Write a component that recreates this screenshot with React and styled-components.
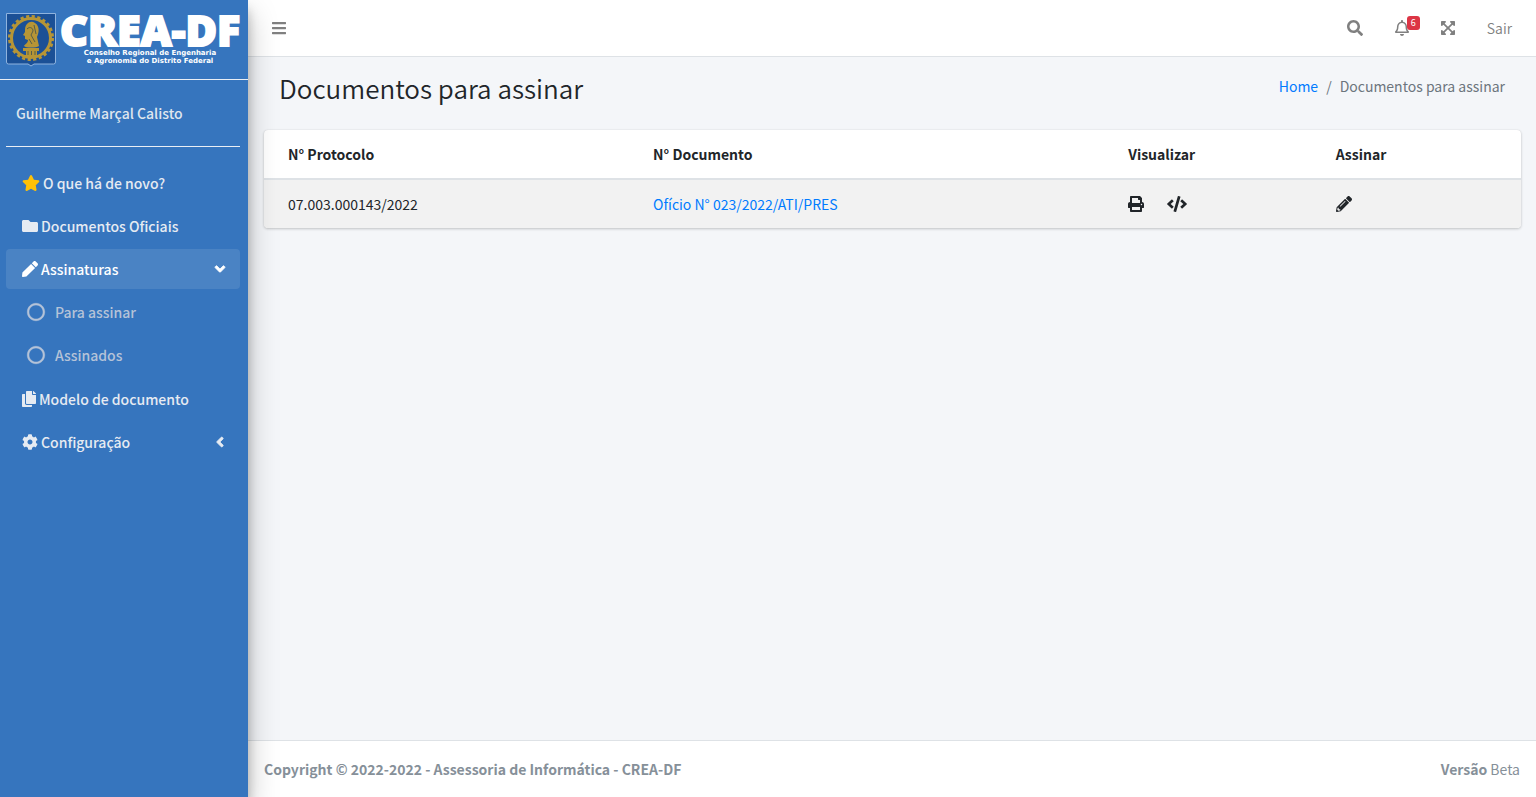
import React from "react";
import styled, { createGlobalStyle, css } from "styled-components";
import {
  FaAngleDown,
  FaAngleLeft,
  FaBars,
  FaCode,
  FaCog,
  FaCopy,
  FaExpandArrowsAlt,
  FaFolder,
  FaPen,
  FaPencilAlt,
  FaPrint,
  FaRegBell,
  FaRegCircle,
  FaSearch,
  FaStar,
} from "react-icons/fa";

const GlobalStyle = createGlobalStyle`
  *, *::before, *::after { box-sizing: border-box; }
  body {
    margin: 0;
    font-family: "Source Sans Pro", "Noto Sans CJK SC", "Noto Sans", sans-serif;
    font-size: 14px;
    line-height: 24px;
    color: #212529;
    background: #f4f6f9;
  }
  a { color: #007bff; text-decoration: none; }
  button { font: inherit; color: inherit; background: none; border: 0; padding: 0; cursor: pointer; }
  svg { flex: none; }
`;

const Page = styled.div`
  display: flex;
  min-height: 100vh;
`;

const Sidebar = styled.aside`
  flex: none;
  width: 248px;
  background: #3675be;
  box-shadow: 0 14px 28px rgba(0, 0, 0, 0.25), 0 10px 10px rgba(0, 0, 0, 0.22);
  z-index: 1;
`;

const Brand = styled.a`
  display: block;
  height: 80px;
  padding: 8px 4px;
  border-bottom: 1px solid #e9eef5;
  svg { display: block; overflow: visible; }
`;

const SidebarBody = styled.div`
  padding: 0 8px 0 6px;
`;

const UserName = styled.a`
  display: block;
  padding: 21px 10px;
  && { color: #dfe6ee; }
  border-bottom: 1px solid #e9eef5;
  font-weight: 500;
`;

const Menu = styled.ul`
  list-style: none;
  margin: 16px 0 0;
  padding: 0;
`;

const SubMenu = styled.ul`
  list-style: none;
  margin: 3px 0 4px;
  padding: 0;
`;

const MenuItem = styled.li`
  margin-bottom: 3px;
`;

const menuRow = css`
  display: flex;
  align-items: center;
  width: 100%;
  height: 40px;
  padding: 0 12px 0 ${(p) => (p.$sub ? "21px" : "16px")};
  gap: ${(p) => (p.$sub ? "10px" : "3px")};
  color: ${(p) => (p.$active ? "#ffffff" : p.$sub ? "#b5c3d8" : "#e6ebf2")};
  background: ${(p) => (p.$active ? "rgba(255, 255, 255, 0.1)" : "transparent")};
  border-radius: 4px;
  font-weight: 500;
  text-align: left;
`;

const MenuLink = styled.a`
  && {
    ${menuRow}
  }
`;

const MenuToggle = styled.button.attrs({ type: "button" })`
  && {
    ${menuRow}
  }
`;

const MenuLabel = styled.span`
  flex: 1;
`;

const RingIcon = styled(FaRegCircle)`
  width: 18px;
  height: 18px;
  stroke: currentColor;
  stroke-width: 14px;
  overflow: visible;
`;

const Chevron = styled.span`
  display: flex;
  font-size: 16px;
  svg { stroke: currentColor; stroke-width: 24px; }
`;

/* Glyphs whose drawing is 14px wide inside a 16px square */
const NarrowIcon = styled.span`
  display: flex;
  justify-content: center;
  width: 14px;
  font-size: 16px;
`;

const Main = styled.div`
  flex: 1;
  min-width: 0;
  display: flex;
  flex-direction: column;
`;

const TopBar = styled.header`
  display: flex;
  align-items: center;
  justify-content: space-between;
  height: 57px;
  padding: 0 24px;
  background: #fff;
  border-bottom: 1px solid #dee2e6;
  color: #808080;
`;

const TopActions = styled.nav`
  display: flex;
  align-items: center;
  gap: 32px;
`;

const IconButton = styled.button`
  display: flex;
  position: relative;
`;

const Badge = styled.span`
  position: absolute;
  top: -4px;
  left: 12px;
  padding: 0 4px;
  border-radius: 3px;
  background: #dc3545;
  color: #fff;
  font-size: 9px;
  line-height: 14px;
`;

const LogoutLink = styled.a`
  && { color: #808080; }
  font-weight: 350;
`;

const ContentHeader = styled.div`
  display: flex;
  justify-content: space-between;
  align-items: flex-start;
  padding: 13px 31px 24px;
`;

const Title = styled.h1`
  margin: 0;
  font-size: 26px;
  line-height: 36px;
  font-weight: 350;
`;

const Breadcrumb = styled.ol`
  display: flex;
  gap: 8px;
  margin: 4px 0 0;
  padding: 0;
  list-style: none;
  color: #6c757d;
`;

const Card = styled.section`
  margin: 0 15px 0 16px;
  border-radius: 4px;
  overflow: hidden;
  background: #fff;
  box-shadow: 0 0 1px rgba(0, 0, 0, 0.13), 0 1px 3px rgba(0, 0, 0, 0.2);
`;

const Table = styled.table`
  width: 100%;
  table-layout: fixed;
  border-collapse: separate;
  border-spacing: 0;
  th, td { padding: 12px; text-align: left; vertical-align: middle; }
  th { font-weight: 700; border-bottom: 2px solid #dee2e6; }
  tr > :first-child { padding-left: 24px; }
  tbody tr { background: #f2f2f2; }
`;

const Column = styled.col`
  width: ${(p) => p.$width};
`;

const CellActions = styled.div`
  display: flex;
  align-items: center;
  gap: 23px;
`;

const Footer = styled.footer`
  display: flex;
  justify-content: space-between;
  margin-top: auto;
  padding: 16px;
  background: #fff;
  border-top: 1px solid #dee2e6;
  color: #869099;
`;

function BrandLogo() {
  return (
    <svg width="240" height="62" viewBox="0 0 240 62" role="img" aria-label="CREA-DF">
      <path d="M2.500 5.500H51.500V54Q51.500 56 49.500 56H30L27 58L24 56H4.500Q2.500 56 2.500 54Z" fill="#1b5096" stroke="#8fb3de" />
      <circle cx="27" cy="30" r="21.500" fill="none" stroke="#b69536" strokeWidth="3" strokeDasharray="3.170 2.460" />
      <circle cx="27" cy="30" r="19.500" fill="none" stroke="#b69536" strokeWidth="3" />
      <path d="M21 22C21 15 27 12 31 15C36 18 35 25 33 29L35 38C32 40 22 40 20 38C21 36 24 35 24 32L21 31L21 28L19 27L21 24Z" fill="#b69536" />
      <path d="M23 21C26 18 29 20 29 23L27 27L31 34M30 17L32 26M25 31L28 36" fill="none" stroke="#575e49" strokeWidth="1" />
      <path d="M19 40H35V43H33V47H35V49H20V47H22V43H19Z" fill="#b69536" />
      <path d="M24 43V47M27.500 43V47M31 43V47" stroke="#575e49" />
      <text x="56" y="38" fill="#fff" stroke="#fff" strokeWidth="2" fontFamily="Open Sans, sans-serif" fontSize="43" fontWeight="800">CREA-DF</text>
      <text x="146" y="47" fill="#fff" textAnchor="middle" fontFamily="DejaVu Sans, sans-serif" fontSize="7" fontWeight="700">Conselho Regional de Engenharia</text>
      <text x="146" y="55" fill="#fff" textAnchor="middle" fontFamily="DejaVu Sans, sans-serif" fontSize="7" fontWeight="700">e Agronomia do Distrito Federal</text>
    </svg>
  );
}

export default function App() {
  return (
    <>
      <GlobalStyle />
      <Page>
        <Sidebar>
          <Brand href="#"><BrandLogo /></Brand>
          <SidebarBody>
            <UserName href="#">Guilherme Marçal Calisto</UserName>
            <Menu>
              <MenuItem><MenuLink href="#"><FaStar size={18} color="#ffc107" /><MenuLabel>O que há de novo?</MenuLabel></MenuLink></MenuItem>
              <MenuItem><MenuLink href="#"><FaFolder size={16} /><MenuLabel>Documentos Oficiais</MenuLabel></MenuLink></MenuItem>
              <MenuItem>
                <MenuToggle $active aria-expanded="true"><FaPen size={16} /><MenuLabel>Assinaturas</MenuLabel><Chevron><FaAngleDown /></Chevron></MenuToggle>
                <SubMenu>
                  <MenuItem><MenuLink $sub href="#"><RingIcon /><MenuLabel>Para assinar</MenuLabel></MenuLink></MenuItem>
                  <MenuItem><MenuLink $sub href="#"><RingIcon /><MenuLabel>Assinados</MenuLabel></MenuLink></MenuItem>
                </SubMenu>
              </MenuItem>
              <MenuItem><MenuLink href="#"><NarrowIcon><FaCopy /></NarrowIcon><MenuLabel>Modelo de documento</MenuLabel></MenuLink></MenuItem>
              <MenuItem><MenuToggle aria-expanded="false"><FaCog size={16} /><MenuLabel>Configuração</MenuLabel><Chevron><FaAngleLeft /></Chevron></MenuToggle></MenuItem>
            </Menu>
          </SidebarBody>
        </Sidebar>
        <Main>
          <TopBar>
            <IconButton type="button" aria-label="Menu"><NarrowIcon><FaBars /></NarrowIcon></IconButton>
            <TopActions>
              <IconButton type="button" aria-label="Buscar"><FaSearch size={16} /></IconButton>
              <IconButton type="button" aria-label="Notificações"><NarrowIcon><FaRegBell /></NarrowIcon><Badge>6</Badge></IconButton>
              <IconButton type="button" aria-label="Tela cheia"><NarrowIcon><FaExpandArrowsAlt /></NarrowIcon></IconButton>
              <LogoutLink href="#">Sair</LogoutLink>
            </TopActions>
          </TopBar>
          <ContentHeader>
            <Title>Documentos para assinar</Title>
            <Breadcrumb>
              <li><a href="#">Home</a></li>
              <li aria-hidden="true">/</li>
              <li>Documentos para assinar</li>
            </Breadcrumb>
          </ContentHeader>
          <Card>
            <Table>
              <colgroup>
                <Column $width="30%" />
                <Column $width="37.8%" />
                <Column $width="16.5%" />
                <Column />
              </colgroup>
              <thead>
                <tr>
                  <th scope="col">N° Protocolo</th>
                  <th scope="col">N° Documento</th>
                  <th scope="col">Visualizar</th>
                  <th scope="col">Assinar</th>
                </tr>
              </thead>
              <tbody>
                <tr>
                  <td>07.003.000143/2022</td>
                  <td><a href="#">Ofício N° 023/2022/ATI/PRES</a></td>
                  <td>
                    <CellActions>
                      <IconButton type="button" aria-label="Imprimir"><FaPrint size={16} /></IconButton>
                      <IconButton type="button" aria-label="Código"><FaCode size={20} /></IconButton>
                    </CellActions>
                  </td>
                  <td><IconButton type="button" aria-label="Assinar"><FaPencilAlt size={16} /></IconButton></td>
                </tr>
              </tbody>
            </Table>
          </Card>
          <Footer>
            <strong>Copyright © 2022-2022 - Assessoria de Informática - CREA-DF</strong>
            <span><strong>Versão</strong> Beta</span>
          </Footer>
        </Main>
      </Page>
    </>
  );
}
